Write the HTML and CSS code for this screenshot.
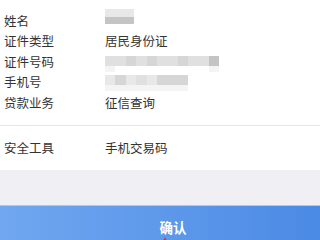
FILE: index.html
```html
<!DOCTYPE html>
<html>
<head>
    <meta charset="UTF-8">
    <title>确认信息</title>
    <link rel="stylesheet" href="styles.css">
</head>
<body>
    <div class="info">
        <div class="row">
            <span class="label">姓名</span>
            <span class="mosaic name-blur">
                <span class="m-row"><i class="c1"></i><i class="c1"></i><i class="c1"></i></span>
                <span class="m-row"><i class="c4"></i><i class="c4"></i><i class="c4"></i></span>
            </span>
        </div>
        <div class="row">
            <span class="label">证件类型</span>
            <span class="value">居民身份证</span>
        </div>
        <div class="row">
            <span class="label">证件号码</span>
            <span class="mosaic id-blur">
                <span class="m-row tall"><i class="c2"></i><i class="c2"></i><i class="c3"></i><i class="c2"></i><i class="c3"></i><i class="c2"></i><i class="c2"></i><i class="c3"></i><i class="c2"></i><i class="c2"></i><i class="c4"></i></span>
                <span class="m-row thin"><i class="c0"></i><i></i><i></i><i></i><i></i><i></i><i></i><i></i><i></i><i></i><i class="c0"></i></span>
            </span>
        </div>
        <div class="row">
            <span class="label">手机号</span>
            <span class="mosaic phone-blur">
                <span class="m-row tall"><i class="c1"></i><i class="c3"></i><i class="c1"></i><i class="c2"></i><i class="c1"></i><i class="c3"></i><i class="c3"></i><i class="c3"></i></span>
                <span class="m-row thin"><i class="c0"></i><i class="c0"></i><i class="c0"></i><i class="c0"></i><i class="c0"></i><i class="c0"></i><i class="c0"></i><i class="c0"></i></span>
            </span>
        </div>
        <div class="row">
            <span class="label">贷款业务</span>
            <span class="value">征信查询</span>
        </div>
    </div>

    <div class="tool">
        <span class="label">安全工具</span>
        <span class="value">手机交易码</span>
    </div>

    <div class="gap"></div>

    <div class="btn">
        确认
        <span class="pointer"></span>
    </div>
</body>
</html>
```

FILE: styles.css
```css
body {
    margin: 0;
    background: #fff;
    font-family: "Noto Sans CJK SC", "Noto Sans", sans-serif;
    color: #333;
    font-size: 12.5px;
    overflow: hidden;
}
.info {
    padding: 10px 0 12px;
}
.row {
    display: flex;
    align-items: center;
    height: 20.5px;
}
.label {
    width: 101px;
    padding-left: 4px;
    flex-shrink: 0;
}
.value {
    color: #333;
}
.mosaic {
    display: flex;
    flex-direction: column;
}
.m-row {
    display: flex;
}
.m-row i {
    display: block;
    width: 10.4px;
    height: 7.5px;
}
.m-row.tall i {
    height: 10px;
}
.m-row.thin i {
    height: 6px;
}
.name-blur {
    margin-top: -7px;
}
.name-blur .m-row i {
    width: 9.7px;
}
.id-blur {
    margin-top: 6px;
}
.phone-blur {
    margin-top: 2px;
}
.c0 { background: #f4f4f4; }
.c1 { background: #e8e8e8; }
.c2 { background: #e0e0e0; }
.c3 { background: #d6d6d6; }
.c4 { background: #c4c4c4; }
.tool {
    display: flex;
    align-items: center;
    height: 44px;
    border-top: 1px solid #e6e6e6;
}
.gap {
    height: 35px;
    background: #efeff4;
}
.btn {
    position: relative;
    height: 40px;
    box-sizing: border-box;
    padding: 11px 0 0 26px;
    text-align: center;
    color: #fff;
    font-size: 13.5px;
    font-weight: bold;
    background: linear-gradient(to right, #70a7ef, #4b8ae5);
    border-top: 1px solid #a9c9f3;
}
.pointer {
    position: absolute;
    left: 162px;
    top: 31px;
    width: 0;
    height: 0;
    border-left: 3px solid transparent;
    border-right: 3px solid transparent;
    border-bottom: 6px solid #e0302a;
}
```
